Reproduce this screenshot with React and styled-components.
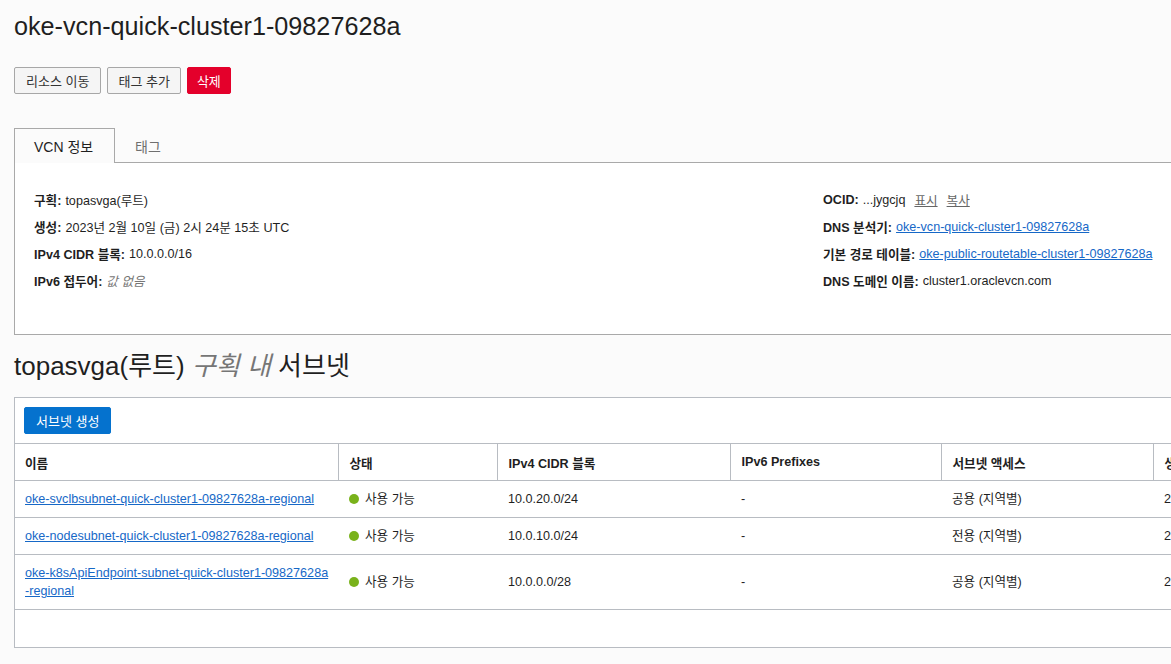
import React from "react";
import styled, { createGlobalStyle } from "styled-components";

const Global = createGlobalStyle`
  html, body { margin: 0; padding: 0; overflow: hidden; background: #fbfbfb; }
  body { font-family: "Liberation Sans", "Noto Sans CJK KR", sans-serif; color: #1f1f1f; }
  * { box-sizing: border-box; }
`;

const Page = styled.div`
  width: 1700px;
  padding: 10px 0 0 14px;
`;

const Title = styled.h1`
  margin: 0;
  font-size: 25.2px;
  line-height: 32px;
  font-weight: 400;
  color: #1f1f1f;
`;

const Actions = styled.div`
  display: flex;
  gap: 6px;
  margin-top: 25px;
`;

const Button = styled.button`
  height: 27px;
  padding: 0 ${(p) => p.$pad || 12}px;
  font-family: inherit;
  font-size: 13px;
  border-radius: 2px;
  border: 1px solid ${(p) => (p.$variant === "danger" ? "#e4002b" : p.$variant === "primary" ? "#0572ce" : "#a7a7a7")};
  background: ${(p) => (p.$variant === "danger" ? "#e4002b" : p.$variant === "primary" ? "#0572ce" : "#f5f5f5")};
  color: ${(p) => (p.$variant ? "#fff" : "#333")};
  cursor: pointer;
`;

const Tabs = styled.div`
  margin-top: 34px;
  display: flex;
  border-bottom: 1px solid #a9a9a9;
  height: 35px;
`;

const Tab = styled.div`
  height: 35px;
  padding: 0 19px;
  display: flex;
  align-items: center;
  font-size: 14px;
  color: ${(p) => (p.$active ? "#1f1f1f" : "#6f6f6f")};
  border: 1px solid ${(p) => (p.$active ? "#a9a9a9" : "transparent")};
  border-bottom: none;
  background: ${(p) => (p.$active ? "#fbfbfb" : "transparent")};
  margin-bottom: -1px;
  position: relative;
  z-index: 1;
  width: ${(p) => (p.$active ? "101px" : "auto")};
`;

const InfoPanel = styled.div`
  border: 1px solid #a9a9a9;
  border-top: none;
  height: 172px;
  padding: 23px 19px 0;
  display: grid;
  grid-template-columns: 789px 1fr;
  background: #fff;
`;

const InfoCol = styled.div`
  display: flex;
  flex-direction: column;
`;

const InfoRow = styled.div`
  height: 27px;
  display: flex;
  align-items: center;
  font-size: 12.6px;
  white-space: nowrap;
`;

const Label = styled.b`
  font-weight: 700;
  margin-right: 4px;
`;

const Muted = styled.i`
  color: #767676;
`;

const Link = styled.a`
  color: #1668c7;
  text-decoration: underline;
  white-space: nowrap;
`;

const GreyLink = styled.a`
  color: #666;
  text-decoration: underline;
  margin-left: 9px;
`;

const SectionTitle = styled.h2`
  margin: 15px 0 0;
  font-size: 26px;
  line-height: 32px;
  font-weight: 400;
  color: #1f1f1f;
`;

const Faded = styled.i`
  color: #767676;
`;

const TablePanel = styled.div`
  margin-top: 15px;
  border: 1px solid #b8bcc2;
  background: #fff;
`;

const Toolbar = styled.div`
  padding: 9px 9px 9px;
  display: flex;
`;

const Table = styled.table`
  border-collapse: collapse;
  table-layout: fixed;
  width: 100%;
  font-size: 12.6px;
`;

const Th = styled.th`
  height: 37px;
  text-align: left;
  font-weight: 700;
  padding: 0 ${(p) => (p.$first ? "10px" : "11px")};
  border-top: 1px solid #b8bcc2;
  border-bottom: 1px solid #b8bcc2;
  border-left: ${(p) => (p.$first ? "none" : "1px solid #b8bcc2")};
  width: ${(p) => p.$w}px;
`;

const Td = styled.td`
  height: ${(p) => (p.$tall ? 55 : 37)}px;
  padding: 0 ${(p) => (p.$first ? "10px" : "11px")};
  border-bottom: 1px solid #b8bcc2;
  vertical-align: middle;
  line-height: 18px;
  white-space: nowrap;
`;

const Status = styled.span`
  display: inline-flex;
  align-items: center;
  gap: 6px;
`;

const Dot = styled.span`
  width: 10px;
  height: 10px;
  border-radius: 50%;
  background: #79b21b;
  display: inline-block;
`;

const EmptyRow = styled.td`
  height: 37px;
`;

const rows = [
  { name: ["oke-svclbsubnet-quick-cluster1-09827628a-regional"], cidr: "10.0.20.0/24", access: "공용 (지역별)" },
  { name: ["oke-nodesubnet-quick-cluster1-09827628a-regional"], cidr: "10.0.10.0/24", access: "전용 (지역별)" },
  { name: ["oke-k8sApiEndpoint-subnet-quick-cluster1-09827628a", "-regional"], cidr: "10.0.0.0/28", access: "공용 (지역별)" },
];

export default function App() {
  return (
    <>
      <Global />
      <Page>
        <Title>oke-vcn-quick-cluster1-09827628a</Title>
        <Actions>
          <Button $pad={11}>리소스 이동</Button>
          <Button $pad={10}>태그 추가</Button>
          <Button $variant="danger" $pad={9}>삭제</Button>
        </Actions>

        <Tabs>
          <Tab $active>VCN 정보</Tab>
          <Tab>태그</Tab>
        </Tabs>
        <InfoPanel>
          <InfoCol>
            <InfoRow><Label>구획:</Label>topasvga(루트)</InfoRow>
            <InfoRow><Label>생성:</Label>2023년 2월 10일 (금) 2시 24분 15초 UTC</InfoRow>
            <InfoRow><Label>IPv4 CIDR 블록:</Label>10.0.0.0/16</InfoRow>
            <InfoRow><Label>IPv6 접두어:</Label><Muted>값 없음</Muted></InfoRow>
          </InfoCol>
          <InfoCol>
            <InfoRow>
              <Label>OCID:</Label>...jygcjq
              <GreyLink>표시</GreyLink>
              <GreyLink>복사</GreyLink>
            </InfoRow>
            <InfoRow><Label>DNS 분석기:</Label><Link>oke-vcn-quick-cluster1-09827628a</Link></InfoRow>
            <InfoRow><Label>기본 경로 테이블:</Label><Link>oke-public-routetable-cluster1-09827628a</Link></InfoRow>
            <InfoRow><Label>DNS 도메인 이름:</Label>cluster1.oraclevcn.com</InfoRow>
          </InfoCol>
        </InfoPanel>

        <SectionTitle>topasvga(루트) <Faded>구획 내</Faded> 서브넷</SectionTitle>

        <TablePanel>
          <Toolbar>
            <Button $variant="primary" $pad={11}>서브넷 생성</Button>
          </Toolbar>
          <Table>
            <thead>
              <tr>
                <Th $first $w={323}>이름</Th>
                <Th $w={159}>상태</Th>
                <Th $w={233}>IPv4 CIDR 블록</Th>
                <Th $w={211}>IPv6 Prefixes</Th>
                <Th $w={212}>서브넷 액세스</Th>
                <Th $w={200}>생성됨</Th>
                <Th>&nbsp;</Th>
              </tr>
            </thead>
            <tbody>
              {rows.map((r, i) => (
                <tr key={i}>
                  <Td $first $tall={r.name.length > 1}>
                    {r.name.map((n, j) => (
                      <React.Fragment key={j}>
                        {j > 0 && <br />}
                        <Link>{n}</Link>
                      </React.Fragment>
                    ))}
                  </Td>
                  <Td><Status><Dot />사용 가능</Status></Td>
                  <Td>{r.cidr}</Td>
                  <Td>-</Td>
                  <Td>{r.access}</Td>
                  <Td>2023년 2월 10일</Td>
                  <Td />
                </tr>
              ))}
              <tr><EmptyRow colSpan={7} /></tr>
            </tbody>
          </Table>
        </TablePanel>
      </Page>
    </>
  );
}
